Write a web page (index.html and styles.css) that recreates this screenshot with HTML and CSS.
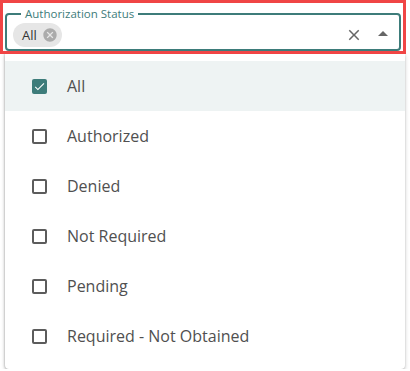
FILE: index.html
```html
<!DOCTYPE html>
<html>
<head>
    <meta charset="UTF-8">
    <title>Authorization Status</title>
    <link rel="stylesheet" href="styles.css">
</head>
<body>
    <div class="filter">
        <fieldset class="field">
            <legend>Authorization Status</legend>
            <span class="chip">
                All
                <svg class="chip-del" viewBox="0 0 24 24"><path d="M12 2C6.47 2 2 6.47 2 12s4.47 10 10 10 10-4.47 10-10S17.53 2 12 2zm5 13.59L15.59 17 12 13.41 8.41 17 7 15.59 10.59 12 7 8.41 8.41 7 12 10.59 15.59 7 17 8.41 13.41 12 17 15.59z"/></svg>
            </span>
            <span class="spacer"></span>
            <svg class="btn-clear" viewBox="0 0 24 24"><path d="M19 6.41 17.59 5 12 10.59 6.41 5 5 6.41 10.59 12 5 17.59 6.41 19 12 13.41 17.59 19 19 17.59 13.41 12z"/></svg>
            <svg class="btn-arrow" viewBox="0 0 24 24"><path d="m7 14 5-5 5 5z"/></svg>
        </fieldset>
    </div>

    <ul class="menu">
        <li class="opt selected"><span class="box"><svg viewBox="0 0 24 24"><path d="M9 16.2 4.8 12l-1.4 1.4L9 19 21 7l-1.4-1.4L9 16.2z"/></svg></span>All</li>
        <li class="opt"><span class="box"></span>Authorized</li>
        <li class="opt"><span class="box"></span>Denied</li>
        <li class="opt"><span class="box"></span>Not Required</li>
        <li class="opt"><span class="box"></span>Pending</li>
        <li class="opt"><span class="box"></span>Required - Not Obtained</li>
    </ul>
</body>
</html>
```

FILE: styles.css
```css
html,
body {
    margin: 0;
    padding: 0;
    background: #fff;
}

body {
    font-family: 'Open Sans', sans-serif;
    color: #505050;
}

/* red highlight round the select */
.filter {
    position: relative;
    z-index: 2;
    width: 406px;
    height: 54px;
    box-sizing: border-box;
    border: 3px solid #f04545;
    padding: 3px 2px 0 2px;
}

.field {
    display: flex;
    align-items: center;
    margin: 0;
    height: 45px;
    box-sizing: border-box;
    border: 2px solid #3d7c7a;
    border-radius: 4px;
    padding: 0 4px 2px 6px;
}

.field legend {
    font-size: 11.5px;
    line-height: 16px;
    color: #3d7c7a;
    padding: 0 4px;
    margin-left: 8px;
}

.chip {
    display: flex;
    align-items: center;
    height: 24px;
    padding: 0 4px 0 9px;
    border-radius: 12px;
    background: #e6e6e6;
    font-size: 13px;
    color: #333;
}

.chip-del {
    width: 16px;
    height: 16px;
    margin-left: 5px;
    fill: #ababab;
}

.spacer {
    flex: 1;
}

.btn-clear {
    width: 18px;
    height: 18px;
    fill: #666;
    margin-right: 8px;
}

.btn-arrow {
    width: 24px;
    height: 24px;
    fill: #666;
    margin-top: -1px;
}

/* dropdown */
.menu {
    list-style: none;
    margin: -1px 0 0 5px;
    padding: 8px 0;
    width: 400px;
    background: #fff;
    border-radius: 0 0 4px 4px;
    box-shadow: 0 2px 4px rgba(0, 0, 0, .2), 0 1px 2px rgba(0, 0, 0, .12), -1px 0 2px rgba(0, 0, 0, .1);
}

.opt {
    display: flex;
    align-items: center;
    height: 50px;
    padding-left: 27px;
    font-size: 16px;
}

.opt.selected {
    background: #eef3f3;
}

.box {
    width: 15px;
    height: 15px;
    box-sizing: border-box;
    border: 2px solid #5c5c5c;
    border-radius: 2px;
    margin-right: 20px;
}

.selected .box {
    border: 0;
    background: #3d7c7a;
    display: flex;
    align-items: center;
    justify-content: center;
}

.selected .box svg {
    width: 13px;
    height: 13px;
    fill: #fff;
}
```
